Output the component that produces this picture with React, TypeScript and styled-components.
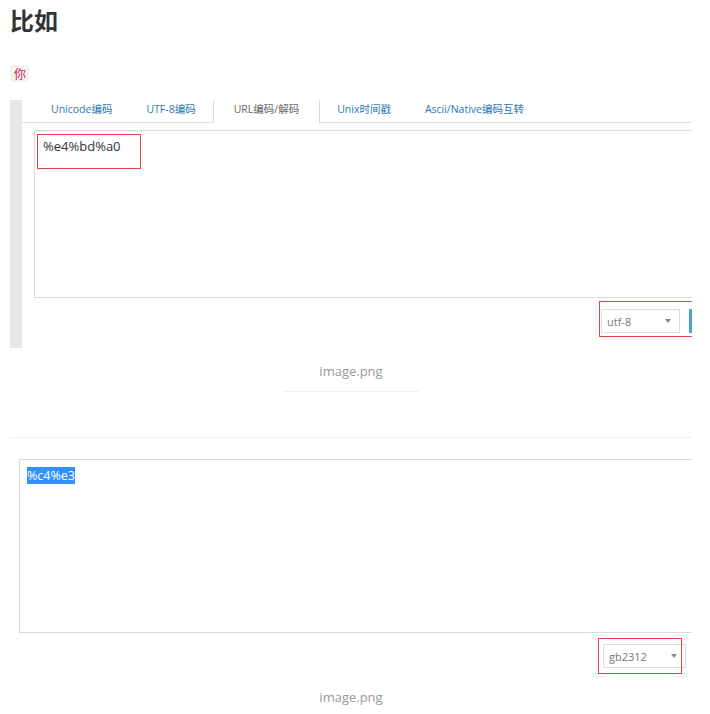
import React from 'react';
import styled, { createGlobalStyle } from 'styled-components';

const GlobalStyle = createGlobalStyle`
  body {
    margin: 0;
    background: #fff;
    font-family: "Open Sans", "Noto Sans CJK SC", sans-serif;
    color: #333;
  }
`;

const Article = styled.div`
  width: 682px;
  padding: 0 18px 0 10px;
  display: flex;
  flex-direction: column;
`;

const Title = styled.h1`
  margin: 0;
  padding-top: 2px;
  font-family: "Noto Sans CJK SC", sans-serif;
  font-size: 24px;
  line-height: 36px;
  font-weight: 700;
  color: #333;
`;

const Para = styled.p`
  margin: 27px 0 0;
  line-height: 17px;
  height: 17px;
`;

const Code = styled.code`
  display: inline-block;
  height: 17px;
  line-height: 17px;
  padding: 0 3px 0 4px;
  background: #f2f2f2;
  color: #c7254e;
  font-family: "Noto Sans CJK SC", sans-serif;
  font-size: 12px;
  border-radius: 2px;
`;

/* ---------- screenshot 1 ---------- */

const Shot = styled.div`
  margin-top: 18px;
  display: flex;
  height: 248px;
`;

const SideBar = styled.div`
  width: 12px;
  background: #e7e7e7;
  flex-shrink: 0;
`;

const Panel = styled.div`
  flex: 1;
  overflow: hidden;
  background: #fff;
  display: flex;
  flex-direction: column;
  padding-bottom: 15px;
`;

const Tabs = styled.div`
  display: flex;
  height: 22px;
  padding-left: 12px;
  border-bottom: 1px solid #dde1e6;
`;

const Tab = styled.div<{ $active?: boolean }>`
  padding: 0 ${p => (p.$active ? '20px' : '16px')};
  padding-top: 1px;
  line-height: 16px;
  height: 23px;
  font-size: 10.5px;
  white-space: nowrap;
  color: ${p => (p.$active ? '#666' : '#2b77b5')};
  background: ${p => (p.$active ? '#fff' : 'transparent')};
  border-left: 1px solid ${p => (p.$active ? '#d3d8de' : 'transparent')};
  border-right: 1px solid ${p => (p.$active ? '#d3d8de' : 'transparent')};
  box-sizing: border-box;
`;

const Workspace = styled.div`
  margin-left: 12px;
  width: 705px;
  flex-shrink: 0;
  display: flex;
  flex-direction: column;
`;

const TextArea = styled.div<{ $h: number; $border: string; $mt?: number; $open?: boolean }>`
  position: relative;
  box-sizing: border-box;
  height: ${p => p.$h}px;
  margin-top: ${p => p.$mt ?? 0}px;
  border: 1px solid ${p => p.$border};
  border-right-width: ${p => (p.$open ? 0 : 1)}px;
  background: #fff;
  font-size: 13px;
`;

const EncodedText = styled.div`
  padding: 6px 8px;
  line-height: 18px;
  color: #333;
  font-family: "Open Sans", sans-serif;
`;

const Mark = styled.div<{ $l: number; $t: number; $w: number; $h: number }>`
  position: absolute;
  left: ${p => p.$l}px;
  top: ${p => p.$t}px;
  width: ${p => p.$w}px;
  height: ${p => p.$h}px;
  border: 1px solid rgb(224, 71, 76);
  box-sizing: border-box;
  pointer-events: none;
`;

const Controls = styled.div<{ $mt: number; $mr?: number }>`
  display: flex;
  justify-content: flex-end;
  align-items: center;
  gap: 9px;
  margin-top: ${p => p.$mt}px;
  margin-right: ${p => p.$mr ?? 0}px;
`;

const SelectBox = styled.div<{ $w: number }>`
  position: relative;
  box-sizing: border-box;
  width: ${p => p.$w}px;
  height: 24px;
  border: 1px solid #dcdcdc;
  background: #fff;
  display: flex;
  align-items: center;
  justify-content: space-between;
  padding: 0 8px 0 5px;
  font-size: 11px;
  color: #777;
  font-family: "Open Sans", sans-serif;
`;

const Caret = styled.span`
  width: 0;
  height: 0;
  border-left: 3px solid transparent;
  border-right: 3px solid transparent;
  border-top: 4px solid #888;
`;

const BlueButton = styled.div`
  width: 50px;
  height: 24px;
  background: #4a9fe0;
`;

/* ---------- captions ---------- */

const Caption = styled.div<{ $mt: number; $line?: boolean }>`
  align-self: center;
  margin-top: ${p => p.$mt}px;
  width: 135px;
  text-align: center;
  font-size: 13px;
  line-height: 20px;
  color: #999;
  padding-bottom: ${p => (p.$line ? '10px' : '0')};
  border-bottom: ${p => (p.$line ? '1px solid #eee' : 'none')};
`;

const Rule = styled.hr`
  margin: 45px 0 0;
  border: none;
  border-top: 1px solid #eee;
  height: 0;
`;

/* ---------- screenshot 2 ---------- */

const Shot2 = styled.div`
  margin: 21px 0 0 9px;
  display: flex;
  flex-direction: column;
`;

const Selected = styled.span`
  background: #3390ff;
  color: #fff;
  font-family: "Open Sans", sans-serif;
  font-size: 12.5px;
  line-height: 15px;
`;

const Tab2Text = styled.div`
  padding: 8px 7px;
  line-height: 15px;
`;

const tabs = ['Unicode编码', 'UTF-8编码', 'URL编码/解码', 'Unix时间戳', 'Ascii/Native编码互转'];

export default function App() {
  return (
    <>
      <GlobalStyle />
      <Article>
        <Title>比如</Title>
        <Para>
          <Code>你</Code>
        </Para>

        <Shot>
          <SideBar />
          <Panel>
            <Tabs>
              {tabs.map((t, i) => (
                <Tab key={t} $active={i === 2}>
                  {t}
                </Tab>
              ))}
            </Tabs>
            <Workspace>
              <TextArea $h={168} $border="#dcdcdc" $mt={7}>
                <EncodedText>%e4%bd%a0</EncodedText>
                <Mark $l={2} $t={3} $w={104} $h={35} />
              </TextArea>
              <Controls $mt={11}>
                <SelectBox $w={79}>
                  utf-8
                  <Caret />
                  <Mark $l={-3} $t={-9} $w={94} $h={36} />
                </SelectBox>
                <BlueButton />
              </Controls>
            </Workspace>
          </Panel>
        </Shot>

        <Caption $mt={13} $line>
          image.png
        </Caption>

        <Rule />

        <Shot2>
          <TextArea $h={174} $border="#d9d8e2" $open>
            <Tab2Text>
              <Selected>%c4%e3</Selected>
            </Tab2Text>
          </TextArea>
          <Controls $mt={11} $mr={6}>
            <SelectBox $w={83}>
              gb2312
              <Caret />
              <Mark $l={-6} $t={-7} $w={84} $h={36} />
            </SelectBox>
          </Controls>
        </Shot2>

        <Caption $mt={19}>image.png</Caption>
      </Article>
    </>
  );
}
